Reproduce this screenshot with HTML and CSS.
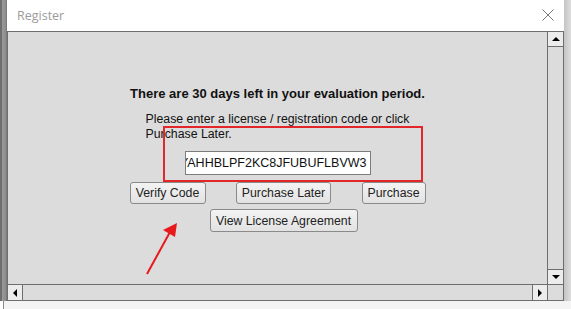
FILE: index.html
```html
<!DOCTYPE html>
<html lang="en">
<head>
    <meta charset="UTF-8">
    <meta name="viewport" content="width=device-width, initial-scale=1.0">
    <title>Register</title>
    <link rel="stylesheet" href="styles.css">
</head>
<body>
    <div class="desktop">
        <div class="side side-left"></div>

        <div class="window">
            <div class="titlebar">
                <span class="title">Register</span>
                <svg class="close" width="12" height="12" viewBox="0 0 12 12">
                    <path d="M0.5 0.5 L11.5 11.5 M11.5 0.5 L0.5 11.5" stroke="#7a7a7a" stroke-width="1" fill="none"/>
                </svg>
            </div>

            <div class="panel">
                <div class="viewport">
                    <div class="register">
                        <p class="headline">There are 30 days left in your evaluation period.</p>
                        <p class="hint">Please enter a license / registration code or click<br>Purchase Later.</p>
                        <div class="code-field"><span>YAHHBLPF2KC8JFUBUFLBVW3</span></div>
                        <div class="button-row">
                            <button class="btn btn-verify">Verify Code</button>
                            <button class="btn btn-later">Purchase Later</button>
                            <button class="btn btn-buy">Purchase</button>
                        </div>
                        <div class="button-row single">
                            <button class="btn btn-license">View License Agreement</button>
                        </div>
                    </div>

                    <!-- annotation drawn over the dialog -->
                    <div class="highlight"></div>
                    <svg class="arrow" width="60" height="70" viewBox="0 0 60 70">
                        <line x1="5" y1="64" x2="28" y2="22" stroke="#e8191c" stroke-width="2"/>
                        <polygon points="35,13 21,20 33,27" fill="#e8191c"/>
                    </svg>
                </div>

                <div class="vscroll">
                    <div class="arrow-btn"><span class="tri tri-up"></span></div>
                    <div class="track"></div>
                    <div class="arrow-btn"><span class="tri tri-down"></span></div>
                </div>
                <div class="hscroll">
                    <div class="arrow-btn"><span class="tri tri-left"></span></div>
                    <div class="track"></div>
                    <div class="arrow-btn"><span class="tri tri-right"></span></div>
                </div>
                <div class="corner"></div>
            </div>
        </div>

        <div class="side side-right"></div>
    </div>
    <div class="below"></div>
</body>
</html>
```

FILE: styles.css
```css
body {
    margin: 0;
    background: #f2f2f2;
    font-family: "Liberation Sans", Arial, sans-serif;
    overflow: hidden;
}

.desktop {
    display: flex;
    height: 301px;
}

.side-left {
    width: 7px;
    background: linear-gradient(to right, #6e6e6e 0, #6e6e6e 2px, #9a9a9a 2px, #8c8c8c 6px, #6a6a6a 7px);
}

.side-right {
    flex-grow: 1;
    background: linear-gradient(to right, #c4c4c4, #dedede);
}

.window {
    width: 557px;
    display: flex;
    flex-direction: column;
    background: #fff;
}

/* title bar */

.titlebar {
    height: 31px;
    display: flex;
    align-items: center;
    justify-content: space-between;
    padding: 0 10px 0 10px;
    box-sizing: border-box;
    background: #fff;
}

.title {
    font-family: "Open Sans", "Noto Sans", sans-serif;
    font-size: 12.5px;
    color: #9b9b9b;
    margin-top: -1px;
}

.close {
    margin-top: -1px;
}

/* scroll pane */

.panel {
    flex-grow: 1;
    display: grid;
    grid-template-columns: 1fr 16px;
    grid-template-rows: 1fr 16px;
    border: 1px solid #6e6e6e;
    background: #dcdcdc;
}

.viewport {
    position: relative;
    overflow: hidden;
}

.register {
    display: flex;
    flex-direction: column;
    align-items: center;
    padding-top: 54px;
}

.headline {
    margin: 0;
    font-size: 13px;
    font-weight: bold;
    line-height: 16px;
    color: #111;
}

.hint {
    margin: 10px 0 0 0;
    font-size: 12.3px;
    line-height: 15px;
    color: #111;
}

.code-field {
    margin-top: 9px;
    width: 186px;
    height: 24px;
    box-sizing: border-box;
    border: 1px solid #7c7c7c;
    background: #fff;
    display: flex;
    justify-content: flex-end;
    align-items: center;
    overflow: hidden;
    padding-right: 3px;
    font-size: 12.5px;
    color: #111;
    white-space: nowrap;
}

.button-row {
    width: 296px;
    display: flex;
    justify-content: space-between;
    margin-top: 7px;
}

.button-row.single {
    justify-content: center;
    margin-top: 5px;
    padding-left: 12px;
    box-sizing: border-box;
}

.btn {
    height: 22px;
    padding: 0;
    font-family: "Liberation Sans", Arial, sans-serif;
    font-size: 12.3px;
    color: #222;
    background: linear-gradient(#f3f3f3, #e2e2e2);
    border: 1px solid #8a8a8a;
    border-radius: 3px;
}

.btn-verify {
    width: 76px;
}

.btn-later {
    width: 95px;
}

.btn-buy {
    width: 64px;
}

.btn-license {
    width: 148px;
    height: 23px;
}

.highlight {
    position: absolute;
    left: 155px;
    top: 94px;
    width: 260px;
    height: 56px;
    box-sizing: border-box;
    border: 2px solid #e3262a;
}

.arrow {
    position: absolute;
    left: 134px;
    top: 178px;
}

/* scrollbars */

.vscroll {
    display: flex;
    flex-direction: column;
    border-left: 1px solid #6e6e6e;
}

.hscroll {
    display: flex;
    border-top: 1px solid #6e6e6e;
}

.track {
    flex-grow: 1;
    background: #dcdcdc;
}

.arrow-btn {
    width: 15px;
    height: 15px;
    display: flex;
    align-items: center;
    justify-content: center;
    background: #ececec;
    box-sizing: border-box;
}

.vscroll .arrow-btn:first-child {
    border-bottom: 1px solid #6e6e6e;
}

.vscroll .arrow-btn:last-child {
    border-top: 1px solid #6e6e6e;
}

.hscroll .arrow-btn:first-child {
    border-right: 1px solid #6e6e6e;
}

.hscroll .arrow-btn:last-child {
    border-left: 1px solid #6e6e6e;
}

.corner {
    background: #dcdcdc;
    border-top: 1px solid #6e6e6e;
    border-left: 1px solid #6e6e6e;
}

.tri {
    width: 0;
    height: 0;
}

.tri-up {
    border-left: 4px solid transparent;
    border-right: 4px solid transparent;
    border-bottom: 4px solid #000;
}

.tri-down {
    border-left: 4px solid transparent;
    border-right: 4px solid transparent;
    border-top: 4px solid #000;
}

.tri-left {
    border-top: 4px solid transparent;
    border-bottom: 4px solid transparent;
    border-right: 4px solid #000;
}

.tri-right {
    border-top: 4px solid transparent;
    border-bottom: 4px solid transparent;
    border-left: 4px solid #000;
}

.below {
    height: 8px;
    background: linear-gradient(to right, #fff 0, #fff 3px, #8a8a8a 3px, #8a8a8a 4px, #f4f4f4 4px);
}
```
